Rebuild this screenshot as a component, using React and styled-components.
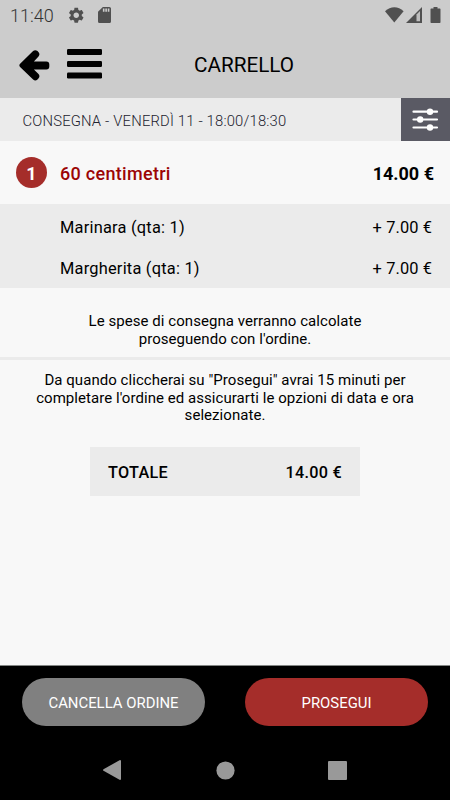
import React from 'react';
import styled, { createGlobalStyle } from 'styled-components';

const GlobalStyle = createGlobalStyle`
  * { box-sizing: border-box; }
  body { margin: 0; background: #f8f8f8; font-family: Roboto, sans-serif; color: #000; }
`;

const Screen = styled.main`
  width: 450px;
  height: 800px;
  display: flex;
  flex-direction: column;
  background: #f8f8f8;
  overflow: hidden;
`;

const Header = styled.header`
  height: 98px;
  flex: none;
  background: #ccc;
`;

const StatusBar = styled.div`
  height: 32px;
  display: flex;
  align-items: center;
  padding: 0 9px 2px 10px;
  color: #505050;
`;

const Clock = styled.span`
  width: 57px;
  font-size: 18px;
  font-weight: 300;
  line-height: 32px;
  padding-top: 2px;
  color: #333;
`;

const StatusIcon = styled.svg`
  display: block;
  flex: none;
  fill: currentColor;
  margin-right: ${({ $gap }) => $gap || 0}px;
  margin-left: ${({ $push }) => ($push ? 'auto' : 0)};
`;

const TitleBar = styled.div`
  height: 66px;
  display: grid;
  grid-template-columns: 145px 1fr 107px;
  align-items: center;
`;

const HeaderTools = styled.div`
  display: flex;
  gap: 17px;
  padding-left: 19px;
`;

const ToolIcon = styled.svg`
  display: block;
`;

const Title = styled.h1`
  margin: 0;
  font-size: 20.7px;
  font-weight: 400;
  line-height: 66px;
  text-align: center;
`;

const DeliveryBar = styled.section`
  height: 43px;
  flex: none;
  display: flex;
  justify-content: space-between;
  background: #ebebeb;
`;

const DeliveryText = styled.span`
  padding-left: 22.5px;
  font-size: 14.8px;
  font-weight: 300;
  letter-spacing: 0.18px;
  line-height: 46px;
  color: #22222e;
`;

const FilterButton = styled.button`
  width: 49px;
  height: 43px;
  padding: 0;
  border: 0;
  display: grid;
  place-items: center;
  background: #5a5a64;
`;

const ProductRow = styled.section`
  height: 63px;
  flex: none;
  display: flex;
  align-items: center;
  padding: 2px 16px 0 16px;
  font-size: 18px;
  font-weight: 700;
`;

const Quantity = styled.span`
  width: 31px;
  height: 31px;
  margin: -2px 13px 0 0;
  border-radius: 50%;
  background: #a52d2a;
  color: #fff;
  line-height: 33px;
  text-align: center;
`;

const ProductName = styled.span`
  flex: 1;
  font-weight: 500;
  letter-spacing: 0.3px;
  color: #9c0505;
`;

const Price = styled.span``;

const Extras = styled.section`
  height: 84px;
  flex: none;
  padding: 4px 18px 4px 60px;
  background: #ebebeb;
`;

const ExtraRow = styled.div`
  display: flex;
  justify-content: space-between;
  font-size: 16.4px;
  line-height: 40.5px;
`;

const ExtraName = styled.span`
  letter-spacing: 0.22px;
`;

const ExtraPrice = styled.span`
  letter-spacing: 0.1px;
`;

const Note = styled.p`
  flex: none;
  margin: 0;
  padding: ${({ $top }) => $top}px 30px 0;
  height: ${({ $height }) => $height}px;
  font-size: 15px;
  letter-spacing: 0.05px;
  line-height: 17.5px;
  text-align: center;
`;

const Divider = styled.hr`
  flex: none;
  width: 100%;
  height: 3px;
  margin: 0;
  border: 0;
  background: #ebebeb;
`;

const Total = styled.section`
  width: 270px;
  height: 49px;
  flex: none;
  align-self: center;
  display: flex;
  align-items: center;
  justify-content: space-between;
  padding: 2px 18px 0;
  background: #ebebeb;
  font-size: 16.2px;
  font-weight: 500;
  letter-spacing: 0.3px;
`;

const Footer = styled.footer`
  height: 135px;
  flex: none;
  margin-top: auto;
  border-top: 1px solid #838684;
  background: #000;
`;

const Actions = styled.div`
  display: flex;
  justify-content: space-between;
  padding: 12px 22px 0;
`;

const ActionButton = styled.button`
  width: 183px;
  height: 48px;
  padding: 2px 0 0;
  border: 0;
  border-radius: 24px;
  background: ${({ $primary }) => ($primary ? '#a52d2a' : '#808080')};
  color: #fff;
  font: 400 14.9px Roboto, sans-serif;
`;

const NavBar = styled.nav`
  height: 74px;
  margin-top: 7px;
  display: grid;
  grid-template-columns: repeat(3, 112.5px);
  justify-content: center;
  align-items: center;
  justify-items: center;
`;

const NavIcon = styled.svg`
  display: block;
  fill: #999;
`;

const Sliders = () => (
  <ToolIcon width="27" height="23" viewBox="0 0 27 23">
    <path d="M1.5 3.7h23.5M1.5 11.5h23.5M1.5 19.5h23.5" stroke="#fff" strokeWidth="2.2" strokeLinecap="round" />
    <g fill="#fff">
      <circle cx="18" cy="3.7" r="3.2" />
      <circle cx="8.2" cy="11.5" r="3.2" />
      <circle cx="18" cy="19.5" r="3.2" />
    </g>
  </ToolIcon>
);

const extras = [
  ['Marinara (qta: 1)', '+ 7.00 €'],
  ['Margherita (qta: 1)', '+ 7.00 €'],
];

export default function App() {
  return (
    <Screen>
      <GlobalStyle />
      <Header>
        <StatusBar>
          <Clock>11:40</Clock>
          <StatusIcon width="18.5" height="18.5" viewBox="0 0 24 24" $gap="12">
            <path d="M19.14 12.94c.04-.3.06-.61.06-.94 0-.32-.02-.64-.07-.94l2.03-1.58c.18-.14.23-.41.12-.61l-1.92-3.32c-.12-.22-.37-.29-.59-.22l-2.39.96c-.5-.38-1.03-.7-1.62-.94l-.36-2.54c-.04-.24-.24-.41-.48-.41h-3.84c-.24 0-.43.17-.47.41l-.36 2.54c-.59.24-1.13.57-1.62.94l-2.39-.96c-.22-.08-.47 0-.59.22L2.74 8.87c-.12.21-.08.47.12.61l2.03 1.58c-.05.3-.09.63-.09.94s.02.64.07.94l-2.03 1.58c-.18.14-.23.41-.12.61l1.92 3.32c.12.22.37.29.59.22l2.39-.96c.5.38 1.03.7 1.62.94l.36 2.54c.05.24.24.41.48.41h3.84c.24 0 .44-.17.47-.41l.36-2.54c.59-.24 1.13-.56 1.62-.94l2.39.96c.22.08.47 0 .59-.22l1.92-3.32c.12-.22.07-.47-.12-.61l-2.01-1.58zM12 15.6c-1.98 0-3.6-1.62-3.6-3.6s1.62-3.6 3.6-3.6 3.6 1.62 3.6 3.6-1.62 3.6-3.6 3.6z" />
          </StatusIcon>
          <StatusIcon width="13" height="16" viewBox="4 2 16 20" preserveAspectRatio="none">
            <path d="M18 2h-8L4.02 8 4 20c0 1.1.9 2 2 2h12c1.1 0 2-.9 2-2V4c0-1.1-.9-2-2-2zm-6 6h-2V4h2v4zm3 0h-2V4h2v4zm3 0h-2V4h2v4z" />
          </StatusIcon>
          <StatusIcon width="19" height="16" viewBox="0 0 19 16" $push $gap="2">
            <path d="M0 4.2C5.6-1.1 13.2-1.1 18.6 4.2L9.3 15.5z" />
          </StatusIcon>
          <StatusIcon width="16" height="16" viewBox="0 0 16 16" $gap="8">
            <path d="M0 16 16 0v16z" />
            <path d="M10.5 14.2V7.4l3.5-3.5v10.3z" fill="#bdbdbd" />
          </StatusIcon>
          <StatusIcon width="11" height="16" viewBox="0 0 11 16">
            <path d="M3.5 0h4v1.5h2.3q.7 0 .7.7v13.1q0 .7-.7.7H1.2q-.7 0-.7-.7V2.2q0-.7.7-.7h2.3z" />
          </StatusIcon>
        </StatusBar>
        <TitleBar>
          <HeaderTools>
            <ToolIcon width="31" height="32" viewBox="-.3 -.4 31 32">
              <path d="M.8 14.3 13.8 1.6Q16 -.1 18.2 1.7L19.3 2.9Q21 5 19.2 7.2L14.6 12.1H27Q30 12.3 30 15V17Q30 19.8 27 20H14.6L19.2 24.6Q21 26.8 19.3 28.9L18.2 30.2Q16 32 13.8 30.2L.8 17.7Q-.7 16 .8 14.3Z" />
            </ToolIcon>
            <ToolIcon width="35" height="32" viewBox="0 0 35 32">
              <rect y="0" width="35" height="6" rx="1.2" />
              <rect y="12" width="35" height="6" rx="1.2" />
              <rect y="23.5" width="35" height="6" rx="1.2" />
            </ToolIcon>
          </HeaderTools>
          <Title>CARRELLO</Title>
        </TitleBar>
      </Header>
      <DeliveryBar>
        <DeliveryText>CONSEGNA - VENERDÌ 11 - 18:00/18:30</DeliveryText>
        <FilterButton aria-label="Opzioni"><Sliders /></FilterButton>
      </DeliveryBar>
      <ProductRow>
        <Quantity>1</Quantity>
        <ProductName>60 centimetri</ProductName>
        <Price>14.00 €</Price>
      </ProductRow>
      <Extras>
        {extras.map(([name, price]) => (
          <ExtraRow key={name}><ExtraName>{name}</ExtraName><ExtraPrice>{price}</ExtraPrice></ExtraRow>
        ))}
      </Extras>
      <Note $top={25} $height={69}>
        Le spese di consegna verranno calcolate<br />proseguendo con l'ordine.
      </Note>
      <Divider />
      <Note $top={12} $height={87}>
        Da quando cliccherai su "Prosegui" avrai 15 minuti per<br />
        completare l'ordine ed assicurarti le opzioni di data e ora<br />selezionate.
      </Note>
      <Total><span>TOTALE</span><span>14.00 €</span></Total>
      <Footer>
        <Actions>
          <ActionButton>CANCELLA ORDINE</ActionButton>
          <ActionButton $primary>PROSEGUI</ActionButton>
        </Actions>
        <NavBar>
          <NavIcon width="22" height="20" viewBox="0 0 22 20"><path d="M18 0q1 0 1 1v18q0 1-1 1L1.5 10.8Q.5 10 1.5 9.2z" /></NavIcon>
          <NavIcon width="19" height="19" viewBox="0 0 19 19"><circle cx="9.5" cy="9.5" r="9.1" /></NavIcon>
          <NavIcon width="19" height="19" viewBox="0 0 19 19"><rect width="19" height="19" rx="1" /></NavIcon>
        </NavBar>
      </Footer>
    </Screen>
  );
}
